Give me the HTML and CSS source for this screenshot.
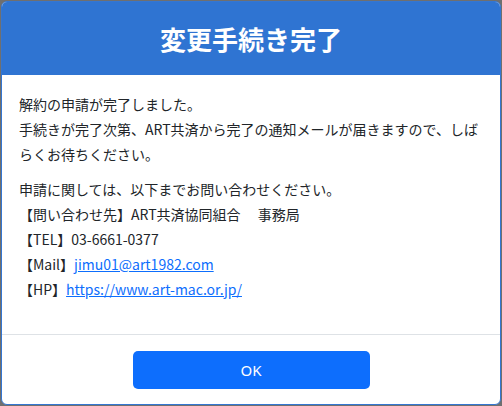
FILE: index.html
```html
<!DOCTYPE html>
<html lang="ja">
<head>
<meta charset="utf-8">
<link rel="stylesheet" href="styles.css">
</head>
<body>
<div class="modal">
  <div class="modal-header">
    <h1 class="modal-title">変更手続き完了</h1>
  </div>
  <div class="modal-body">
    <p class="para">解約の申請が完了しました。<br>手続きが完了次第、ART共済から完了の通知メールが届きますので、しばらくお待ちください。</p>
    <p class="para">申請に関しては、以下までお問い合わせください。<br>【問い合わせ先】ART共済協同組合　 事務局<br>【TEL】03-6661-0377<br>【Mail】<a class="link" href="#">jimu01@art1982.com</a><br>【HP】<a class="link" href="#">https://www.art-mac.or.jp/</a></p>
  </div>
  <div class="modal-footer">
    <button class="btn-ok">OK</button>
  </div>
</div>
</body>
</html>
```
FILE: styles.css
```css
html, body {
  margin: 0;
  padding: 0;
}
body {
  background: #6f6f6f;
  padding: 1px;
  font-family: "Noto Sans CJK JP", "Noto Sans", sans-serif;
  color: #212529;
}
.modal {
  width: 500px;
  height: 404px;
  box-sizing: border-box;
  border: 1px solid #3476d2;
  border-radius: 6px;
  background: #fff;
  overflow: hidden;
  display: flex;
  flex-direction: column;
}
.modal-header {
  background: #2f74d2;
  height: 73px;
  display: flex;
  align-items: center;
  justify-content: center;
}
.modal-title {
  margin: 0;
  color: #fff;
  font-size: 26px;
  font-weight: 700;
  line-height: 1;
}
.modal-body {
  flex: 1;
  padding: 17px 17px 0;
}
.para {
  margin: 0 0 10px;
  font-size: 14px;
  line-height: 25px;
}
.link {
  color: #0d6efd;
  text-decoration: underline;
}
.modal-footer {
  border-top: 1px solid #dee2e6;
  padding: 16px 0 15px;
  display: flex;
  justify-content: center;
}
.btn-ok {
  width: 237px;
  height: 38px;
  border: none;
  border-radius: 5px;
  background: #0d6efd;
  color: #fff;
  font-family: "Noto Sans", "Noto Sans CJK JP", sans-serif;
  font-size: 15px;
}
```
